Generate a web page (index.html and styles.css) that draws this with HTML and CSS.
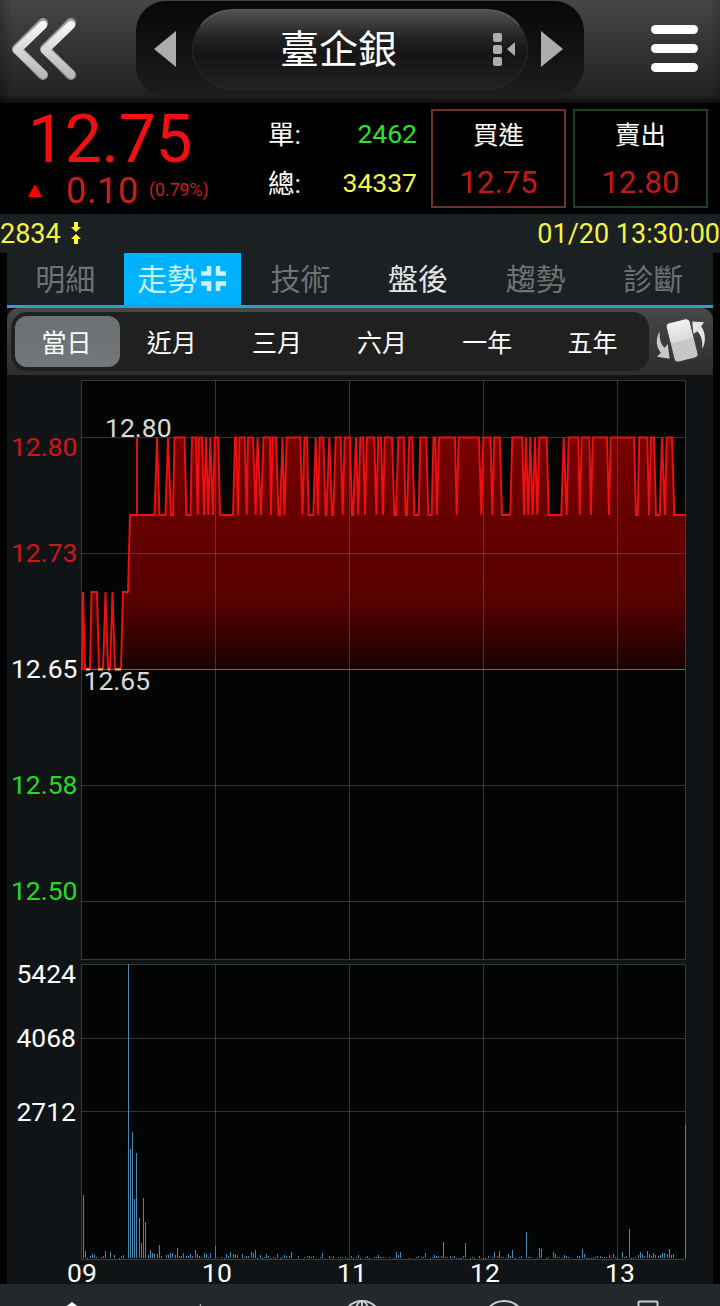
FILE: index.html
```html
<!DOCTYPE html>
<html lang="zh-Hant">
<head>
    <meta charset="UTF-8">
    <meta name="viewport" content="width=device-width, initial-scale=1.0">
    <title>臺企銀 2834</title>
    <link rel="stylesheet" href="styles.css">
</head>
<body>
    <header class="header">
        <svg class="icon-back" width="68" height="64" viewBox="0 0 68 64">
            <defs>
                <linearGradient id="silver" x1="0" y1="0" x2="0" y2="1">
                    <stop offset="0" stop-color="#f6f6f6"/>
                    <stop offset="1" stop-color="#b8b8b8"/>
                </linearGradient>
            </defs>
            <g fill="none" stroke-linecap="round" stroke-linejoin="round">
                <path stroke="#999" stroke-width="10" d="M32 7 L6 33 L32 59 M60 7 L34 33 L60 59"/>
                <path stroke="url(#silver)" stroke-width="8.5" d="M32 9 L6 34 L32 58 M60 9 L34 34 L60 58"/>
            </g>
        </svg>
        <div class="switcher">
            <svg class="arrow" width="24" height="38" viewBox="0 0 24 38"><path d="M1 19 L23 1 V37Z" fill="#acacac"/></svg>
            <div class="stock-name">
                <span>臺企銀</span>
                <svg class="icon-list" width="26" height="36" viewBox="0 0 26 36" fill="#acacac">
                    <rect x="1" y="1" width="9" height="9" rx="2"/>
                    <rect x="1" y="13" width="9" height="9" rx="2"/>
                    <rect x="1" y="25" width="9" height="9" rx="2"/>
                    <path d="M15 17 L23 10 V24Z"/>
                </svg>
            </div>
            <svg class="arrow" width="24" height="38" viewBox="0 0 24 38"><path d="M23 19 L1 1 V37Z" fill="#acacac"/></svg>
        </div>
        <div class="menu">
            <span></span>
            <span></span>
            <span></span>
        </div>
    </header>

    <section class="quote">
        <div class="price">
            <div class="last">12.75</div>
            <div class="change">
                <svg width="14" height="13" viewBox="0 0 14 13"><path d="M7 0 L14 13 H0Z" fill="#f00"/></svg>
                <span class="diff">0.10</span>
                <span class="percent">(0.79%)</span>
            </div>
        </div>
        <div class="volume">
            <div class="row"><span>單:</span><span class="green">2462</span></div>
            <div class="row"><span>總:</span><span class="yellow">34337</span></div>
        </div>
        <div class="box buy"><span>買進</span><span class="value">12.75</span></div>
        <div class="box sell"><span>賣出</span><span class="value">12.80</span></div>
    </section>

    <div class="status">
        <span>2834</span>
        <svg width="10" height="22" viewBox="0 0 10 22" fill="#ff2"><path d="M3 0 H7 V5 H10 L5 10 L0 5 H3Z M5 12 L10 17 H7 V22 H3 V17 H0Z"/></svg>
        <span class="time">01/20 13:30:00</span>
    </div>

    <main class="content">
        <nav class="tabs">
            <div class="tab">明細</div>
            <div class="tab active">走勢
                <svg width="25" height="25" viewBox="0 0 25 25" fill="none" stroke="#c9f5fa" stroke-width="4.5"><path d="M0 7.5 H8 V0 M25 7.5 H17 V0 M0 17.5 H8 V25 M25 17.5 H17 V25"/></svg>
            </div>
            <div class="tab">技術</div>
            <div class="tab enabled">盤後</div>
            <div class="tab">趨勢</div>
            <div class="tab">診斷</div>
        </nav>

        <div class="toolbar">
            <div class="ranges">
                <div class="range selected">當日</div>
                <div class="range">近月</div>
                <div class="range">三月</div>
                <div class="range">六月</div>
                <div class="range">一年</div>
                <div class="range">五年</div>
            </div>
            <svg class="icon-rotate" width="52" height="48" viewBox="0 0 52 48">
                <defs>
                    <linearGradient id="phone" x1="0" y1="0" x2="0" y2="1">
                        <stop offset="0" stop-color="#f2f2f2"/>
                        <stop offset=".5" stop-color="#dadada"/>
                        <stop offset=".51" stop-color="#c6c6c6"/>
                        <stop offset="1" stop-color="#c6c6c6"/>
                    </linearGradient>
                </defs>
                <path fill="#c8c8c8" d="M4 14 C3 21 5 28 9 31 L12 27 L14 42 L1 40 L5 36 C-1 29 0 20 4 14Z"/>
                <path fill="#e4e4e4" d="M37 4 L49 5 L46 9 C51 16 51 26 47 32 C48 24 46 18 42 14 L38 17Z"/>
                <rect x="14" y="3" width="25" height="41" rx="4" fill="url(#phone)" stroke="#3a3a3a" transform="rotate(-14 26 23)"/>
            </svg>
        </div>

        <svg class="chart" width="706" height="909" viewBox="7 375 706 909">
            <defs>
                <linearGradient id="area" gradientUnits="userSpaceOnUse" x1="0" y1="438" x2="0" y2="669">
                    <stop offset="0" stop-color="#780000"/>
                    <stop offset=".35" stop-color="#660000"/>
                    <stop offset=".7" stop-color="#570000"/>
                    <stop offset="1" stop-color="#180202"/>
                </linearGradient>
            </defs>
            <rect x="81.5" y="380.5" width="604" height="579" fill="#030504"/>
            <rect x="81.5" y="964.5" width="604" height="294" fill="#030504"/>
            <path id="price-area" fill="url(#area)"/>
            <path class="grid" d="M81.5 380.5 H685.5 V959.5 H81.5Z M81.5 437.5 H685.5 M81.5 553.5 H685.5 M81.5 785.5 H685.5 M81.5 901.5 H685.5 M215.5 380.5 V959.5 M349.5 380.5 V959.5 M483.5 380.5 V959.5 M617.5 380.5 V959.5"/>
            <path class="grid" d="M81.5 964.5 H685.5 V1259.5 H81.5Z M81.5 1038.5 H685.5 M81.5 1111.5 H685.5 M215.5 964.5 V1259.5 M349.5 964.5 V1259.5 M483.5 964.5 V1259.5 M617.5 964.5 V1259.5"/>
            <path d="M81.5 669.5 H685.5" stroke="#566f8c"/>
            <path id="price-line" class="price-line"/>
            <path d="M86 669.5 H90 M98 669.5 H103 M108 669.5 H110 M115 669.5 H121" stroke="#ffc040" stroke-width="2"/>
            <path id="volume-bars" fill="#4389b2"/>

            <g class="axis" text-anchor="end">
                <text x="77.5" y="456" fill="#d01717">12.80</text>
                <text x="77.5" y="562" fill="#d01717">12.73</text>
                <text x="77.5" y="678" fill="#fff">12.65</text>
                <text x="77.5" y="794" fill="#25dc25">12.58</text>
                <text x="77.5" y="900" fill="#25dc25">12.50</text>
                <text x="76" y="983" fill="#fff">5424</text>
                <text x="76" y="1047" fill="#fff">4068</text>
                <text x="76" y="1121" fill="#fff">2712</text>
            </g>
            <g class="axis" fill="#dadada">
                <text x="105" y="437">12.80</text>
                <text x="83.5" y="690">12.65</text>
            </g>
            <g class="axis" fill="#fff" text-anchor="middle">
                <text x="82" y="1282">09</text>
                <text x="217" y="1282">10</text>
                <text x="352" y="1282">11</text>
                <text x="485" y="1282">12</text>
                <text x="620" y="1282">13</text>
            </g>
        </svg>
    </main>

    <footer class="bottom">
        <svg width="720" height="22" viewBox="0 0 720 22" fill="none" stroke="#c9cccd" stroke-width="2">
            <path d="M64 24 L72 18 L80 24Z" fill="#fff" stroke="none"/>
            <path d="M200 20 L201 24" stroke-width="1"/>
            <circle cx="362" cy="36" r="19"/>
            <ellipse cx="362" cy="36" rx="8" ry="19"/>
            <path d="M362 17 V22"/>
            <circle cx="504" cy="38" r="21"/>
            <rect x="638.5" y="17.5" width="19" height="20" rx="1"/>
        </svg>
    </footer>

    <script src="chart.js"></script>
</body>
</html>
```
FILE: styles.css
```css
body, html {
    margin: 0;
    padding: 0;
}
body {
    width: 720px;
    height: 1306px;
    overflow: hidden;
    background-color: #000;
    color: #fff;
    font-family: Roboto, "Noto Sans CJK TC", sans-serif;
}
svg {
    display: block;
}
.header {
    display: flex;
    box-sizing: border-box;
    height: 103px;
    padding: 0 22px 0 11px;
    background: linear-gradient(90deg, rgba(0, 0, 0, 0.25), transparent 12px, transparent 708px, rgba(0, 0, 0, 0.15)), linear-gradient(#464646, #222 95px, #151515 100px, #111);
}
.icon-back {
    margin-top: 16px;
}
.switcher {
    display: flex;
    align-items: center;
    box-sizing: border-box;
    width: 448px;
    height: 96px;
    margin: 1px 0 0 57px;
    padding: 0 18px 0 17px;
    border-radius: 30px;
    background: linear-gradient(#080808, #141414 60%, #1d1d1d);
}
.stock-name {
    display: flex;
    align-items: center;
    box-sizing: border-box;
    width: 336px;
    height: 81px;
    margin: 0 12px 0 15px;
    padding-left: 87px;
    border: 1px solid #292929;
    border-top: 2px solid #555;
    border-radius: 41px;
    background: linear-gradient(#505050, #222 35%, #151515 55%, #222);
    font-size: 39px;
}
.stock-name span {
    width: 117px;
    height: 78px;
    line-height: 78px;
}
.arrow {
    flex: none;
}
.icon-list {
    margin-left: 95px;
}
.menu {
    display: flex;
    flex-direction: column;
    gap: 10px;
    margin: 25px 0 0 auto;
}
.menu span {
    width: 47px;
    height: 9px;
    border-radius: 5px;
    background-color: #fff;
}
.quote {
    display: flex;
    box-sizing: border-box;
    height: 111px;
    padding: 6px 12px 0 28px;
}
.price {
    width: 240px;
}
.last {
    height: 61px;
    color: #f01010;
    font-size: 66px;
    letter-spacing: -0.3px;
    line-height: 61px;
}
.change {
    display: flex;
    align-items: center;
    height: 41px;
    color: #cc1c1c;
}
.diff {
    margin-left: 24px;
    font-size: 36px;
    letter-spacing: 0.7px;
    line-height: 40px;
}
.percent {
    height: 26px;
    margin-left: 10px;
    font-size: 17.7px;
    line-height: 24px;
}
.volume {
    width: 149px;
    font-size: 26.5px;
}
.row {
    display: flex;
    justify-content: space-between;
    height: 49px;
    line-height: 52px;
}
.green {
    color: #2fe02f;
}
.yellow {
    color: #f8f840;
}
.row .green,
.row .yellow {
    line-height: 50px;
}
.box {
    display: flex;
    flex-direction: column;
    align-items: center;
    box-sizing: border-box;
    width: 135px;
    height: 99px;
    margin-left: 14px;
    border: 2px solid #6d302b;
    font-size: 25.5px;
    line-height: 49px;
}
.sell {
    margin-left: 7px;
    border-color: #1d421d;
}
.box .value {
    color: #c41818;
    font-size: 31px;
    line-height: 45px;
}
.status {
    display: flex;
    align-items: center;
    gap: 10px;
    height: 39px;
    background-color: #1b2023;
    color: #f4f43f;
    font-size: 27px;
    line-height: 41px;
}
.status span {
    height: 39px;
}
.status svg {
    margin-bottom: 1px;
}
.time {
    margin-left: auto;
}
.content {
    width: 706px;
    margin: 0 auto;
    background-color: #111416;
}
.tabs {
    display: flex;
    height: 52px;
    border-bottom: 3px solid #2f9cd0;
    background-color: #1b2023;
    color: #6e7273;
    font-size: 30px;
    line-height: 53px;
}
.tab {
    display: flex;
    box-sizing: border-box;
    width: 117.6px;
    height: 52px;
    padding-right: 1px;
    justify-content: center;
    gap: 4px;
}
.active {
    margin-left: -1px;
    margin-right: 1px;
    padding-right: 2px;
    background-color: #00b2ff;
    color: #c9f5fa;
}
.active svg {
    margin-top: 13px;
}
.enabled {
    color: #e2e4e4;
}
.toolbar {
    display: flex;
    box-sizing: border-box;
    height: 67px;
    padding: 4px 6px 4px 4px;
    border-radius: 12px 12px 0 0;
    background: linear-gradient(#484848, #2d2d2d);
}
.ranges {
    display: flex;
    flex: none;
    box-sizing: border-box;
    width: 638px;
    height: 59px;
    padding: 4px 3px 4px 4px;
    border-radius: 16px;
    background-color: #202020;
    font-size: 25px;
}
.range {
    box-sizing: border-box;
    flex: 1;
    padding-right: 2px;
    border-radius: 12px;
    line-height: 55px;
    text-align: center;
}
.selected {
    background: linear-gradient(#6b7072, #737779);
}
.icon-rotate {
    margin: 5px 0 0 7px;
}
.grid {
    fill: none;
    stroke: rgba(120, 120, 120, 0.42);
}
.price-line {
    fill: none;
    stroke: #ec1010;
    stroke-width: 1.9;
}
.axis {
    font-size: 26.5px;
}
.bottom {
    height: 22px;
    background-color: #24282b;
}
```
FILE: chart.js
```js
// y of each traded price
var HI = 437.5, MID = 515, LOW = 592, BASE = 669;

// opening moves, [x, y]
var points = [
    [82, BASE], [83, LOW], [85, BASE], [90, BASE], [91.5, LOW], [97, LOW], [99, BASE], [103, BASE],
    [105.5, LOW], [108, BASE], [110, BASE], [112.5, LOW], [115, BASE], [121, BASE], [123, LOW],
    [128, LOW], [130, MID], [137, MID], [137, HI], [137, MID], [154.5, MID]
];

// x ranges, alternately at 12.80 and at 12.75
var steps = [
    [157, 157], [159.5, 165.5], [168, 168], [171, 173], [174.5, 184.5], [186.5, 190.5], [192, 196], [197.7, 197.7],
    [199, 202], [204, 204], [206, 206], [208.3, 208.3], [210.3, 210.3], [213, 213], [214.7, 218.3], [220, 233],
    [235, 236], [238, 238], [239.5, 244.7], [246.7, 246.7], [248, 253], [255.7, 255.7], [257.5, 257.5], [261, 261],
    [263.5, 270], [271, 271], [272.7, 276], [278.5, 280], [282.5, 282.5], [284.5, 284.5], [286.7, 300.3], [302.5, 302.5],
    [304.5, 307], [308.7, 313.3], [315.7, 315.7], [318, 318], [319.7, 323.3], [325.7, 326.5], [329.3, 329.3], [332, 333.3],
    [335.7, 340.7], [342.7, 342.7], [344.7, 350], [352, 353], [356, 356], [358.3, 358.3], [360.3, 363.3], [365, 365],
    [367, 374.3], [376.3, 376.3], [378.3, 381], [383, 383], [384.7, 392], [394.3, 396], [398.3, 403.7], [405.7, 407],
    [409.3, 412.3], [414.3, 418.7], [420.3, 426.3], [428.3, 431.7], [433.5, 435.3], [437, 437], [439, 455], [456.7, 456.7],
    [458.7, 479], [481.3, 481.3], [483.3, 490.7], [492.3, 492.3], [494.3, 499.7], [502, 510.3], [512.3, 522.3], [524, 524],
    [526, 526], [528.3, 528.3], [530.3, 530.3], [532.7, 532.7], [535, 535], [537.3, 537.3], [539.3, 546.7], [548.7, 561.3],
    [563.7, 563.7], [566.7, 566.7], [568.7, 578.3], [579.7, 579.7], [581.7, 589.3], [591, 591], [592.7, 607], [609, 609],
    [610.7, 634], [636, 637.7], [639.3, 647.3], [649, 649], [651, 654], [656, 659.7], [662, 662], [665, 665],
    [666.7, 672], [674.3, 685.5]
];
steps.forEach(function (s, i) {
    var y = i % 2 === 0 ? HI : MID;
    points.push([s[0], y], [s[1], y]);
});

var line = "M" + points.map(p => p.join(" ")).join("L");
document.getElementById("price-line").setAttribute("d", line);
document.getElementById("price-area").setAttribute("d", line + "L685.5 669Z");

// volume bars as x:height
var volumes = "83:63 85:7 90:2 92:4 94:3 96:1 101:1 103:2 105:7 110:6 114:3 121:2 123:3 128:294 130:109 132:126 134:59 136:105 " +
    "139:40 141:15 143:60 145:36 148:3 150:8 152:5 154:4 157:4 159:13 161:2 166:3 168:3 170:5 172:5 175:3 177:10 179:2 181:2 " +
    "183:5 186:2 188:2 190:4 192:2 195:8 197:4 199:2 201:1 204:5 206:4 208:1 210:5 215:12 217:1 221:1 226:4 228:2 230:6 233:4 " +
    "235:4 237:3 242:4 244:1 246:2 248:2 251:6 253:5 255:8 260:3 264:1 266:4 268:2 273:1 277:4 282:1 284:3 286:2 289:2 291:6 " +
    "298:2 304:1 307:2 309:2 311:1 313:2 320:1 322:5 329:2 331:1 333:2 338:1 340:1 342:1 345:1 351:2 356:1 358:3 365:1 367:2 " +
    "374:1 376:1 378:3 380:1 383:1 385:1 389:1 396:6 398:3 400:6 416:1 418:2 421:1 423:1 425:5 432:1 434:3 436:2 438:2 441:2 " +
    "443:16 445:1 447:1 450:2 452:1 454:2 463:2 465:15 472:1 479:2 488:2 492:1 494:6 497:2 499:7 501:1 503:1 506:1 508:4 510:2 " +
    "512:8 519:1 521:2 526:26 528:1 530:1 539:10 541:9 548:1 553:6 555:4 557:1 559:1 562:1 564:3 566:2 568:1 577:2 579:2 582:9 " +
    "584:4 595:1 597:2 600:2 602:1 604:1 606:1 609:3 611:1 613:4 615:1 622:6 624:1 626:2 629:29 635:1 638:3 640:6 642:4 644:2 " +
    "647:7 649:4 651:2 653:5 655:3 658:2 660:3 662:5 664:5 667:4 669:9 671:3 673:4 685:133 " +
    // minutes with almost no trades sit one pixel lower
    "87:0 119:0 224:0 257:0 262:0 270:0 275:0 280:0 347:0 353:0 360:0 369:0 394:0 409:0 430:0 456:0 459:0 461:0 470:0 474:0 " +
    "483:0 485:0 515:0 537:0 546:0 586:0 588:0 591:0 593:0 617:0 631:0 633:0";
var bars = volumes.split(" ").map(function (v) {
    var x = +v.split(":")[0], h = +v.split(":")[1];
    return h ? `M${x} ${1258 - h}h1v${h}h-1z` : `M${x} 1258h1v1h-1z`;
});
document.getElementById("volume-bars").setAttribute("d", bars.join(""));
```
